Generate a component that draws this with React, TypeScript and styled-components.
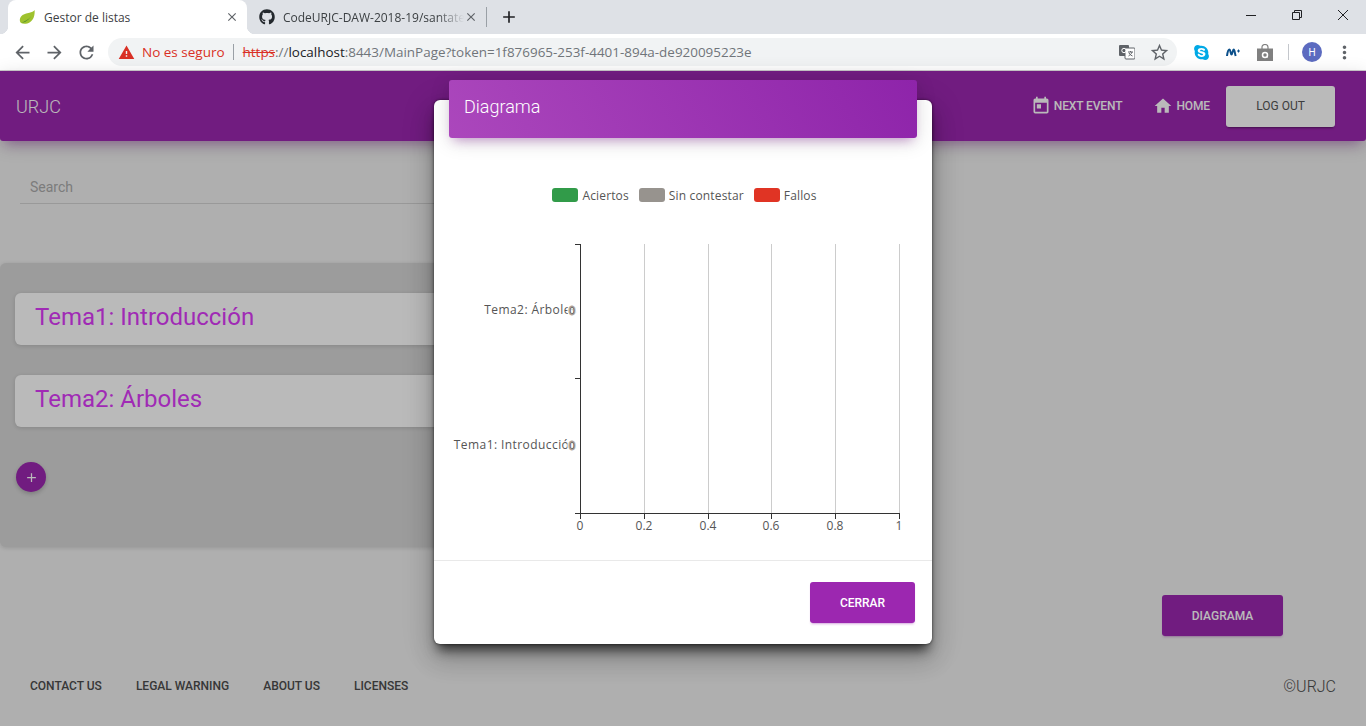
import React from 'react';
import styled, { createGlobalStyle } from 'styled-components';
import { MdArrowBack, MdArrowForward, MdRefresh, MdToday, MdHome, MdAdd, MdStarBorder, MdWarning, MdMoreVert, MdClose } from 'react-icons/md';
import { FaGithub, FaSkype } from 'react-icons/fa';

const Global = createGlobalStyle`
  html, body { margin: 0; padding: 0; height: 726px; overflow: hidden; background: #f0f0f0; }
  body { font-family: Roboto, "Liberation Sans", sans-serif; }
  * { box-sizing: border-box; }
`;

const Root = styled.div`position: relative; width: 1366px; height: 726px; overflow: hidden; display: flex; flex-direction: column;`;

const TabStrip = styled.div`height: 34px; background: #dee1e6; display: flex; align-items: stretch; padding-left: 8px; flex: none;`;
const Tab = styled.div<{ $active?: boolean; $w: number }>`
  position: relative; width: ${p => p.$w}px; display: flex; align-items: center; padding-left: 12px;
  background: ${p => (p.$active ? '#fff' : 'transparent')}; border-radius: 8px 8px 0 0;
  font: 12px "Open Sans", "Noto Sans", sans-serif; color: #3c4043; white-space: nowrap;
  ${p => p.$active && `
    &::before, &::after { content: ''; position: absolute; bottom: 0; width: 8px; height: 8px; }
    &::before { left: -8px; background: radial-gradient(circle at 0 0, transparent 8px, #fff 8.5px); }
    &::after { right: -8px; background: radial-gradient(circle at 100% 0, transparent 8px, #fff 8.5px); }
  `}
`;
const TabIcon = styled.span`width: 16px; height: 16px; margin-right: 8px; display: flex; flex: none;`;
const TabTitle = styled.span<{ $w: number; $fade?: boolean }>`
  width: ${p => p.$w}px; overflow: hidden; flex: none;
  ${p => p.$fade && `-webkit-mask-image: linear-gradient(90deg, #000 85%, transparent);`}
`;
const TabClose = styled.span`display: flex; color: #5f6368; font-size: 14px; flex: none;`;
const TabSep = styled.span`width: 1px; height: 20px; background: #9aa0a6; align-self: center; flex: none;`;
const NewTab = styled.span`width: 44px; display: flex; align-items: center; justify-content: center; font-size: 20px; color: #202124;`;
const WinControls = styled.div`margin-left: auto; display: flex; height: 29px; align-items: center;`;
const WinBtn = styled.span`width: 46px; display: flex; justify-content: center; color: #202124;`;

const Toolbar = styled.div`height: 37px; background: #fff; display: flex; align-items: center; padding-left: 6px; flex: none; border-bottom: 1px solid #ccc;`;
const ToolBtn = styled.span`width: 32px; height: 32px; display: flex; align-items: center; justify-content: center; color: #5f6368; font-size: 21px; flex: none;`;
const Omnibox = styled.div`
  width: 1069px; height: 28px; margin-left: 6px; margin-right: 8px; border-radius: 14px; background: #f1f3f4;
  display: flex; align-items: center; padding-left: 10px; font: 13.45px "Open Sans", "Noto Sans", sans-serif; color: #70757a; white-space: nowrap; flex: none;
`;
const Warn = styled.span`display: flex; color: #d93025; font-size: 17px; margin-right: 7px;`;
const Insecure = styled.span`color: #d93025; font-size: 13.5px;`;
const OmniSep = styled.span`width: 1px; height: 16px; background: #9aa0a6; margin: 0 9px 0 8px;`;
const Strike = styled.span`color: #d93025; text-decoration: line-through;`;
const Host = styled.span`color: #202124;`;
const OmniRight = styled.span`margin-left: auto; display: flex; align-items: center; padding-right: 2px;`;
const ToolSep = styled.span`width: 1px; height: 16px; background: #c4c7cc; margin: 0 7px 0 7px; flex: none;`;
const Avatar = styled.span`width: 20px; height: 20px; border-radius: 50%; background: #5c6bc0; color: #fff; font: 10px Roboto, sans-serif; display: flex; align-items: center; justify-content: center; margin: 0 6px 0 6px; flex: none;`;

const Navbar = styled.header`
  height: 70px; background: #9c27b0; border-radius: 0 0 3px 3px; flex: none; display: flex; align-items: center; padding: 0 31px 0 16px;
  box-shadow: 0 4px 20px rgba(0,0,0,.14), 0 7px 12px -5px rgba(156,39,176,.46); position: relative;
`;
const Brand = styled.span`font-size: 18px; font-weight: 300; color: #fff; margin-right: auto;`;
const NavLink = styled.span<{ $gap: number }>`
  display: flex; align-items: center; gap: 3px; font-size: 12px; font-weight: 500; letter-spacing: -.12px; color: #fff; margin-right: ${p => p.$gap}px; text-transform: uppercase;
  svg { font-size: 20px; }
`;
const Logout = styled.span`width: 109px; height: 41px; border-radius: 3px; background: #fff; color: #555; font-size: 12px; display: flex; align-items: center; justify-content: center; box-shadow: 0 2px 2px rgba(0,0,0,.14), 0 3px 1px -2px rgba(0,0,0,.2);`;

const Search = styled.div`width: 663px; height: 33px; margin: 30px 0 0 20px; border-bottom: 1px solid #d2d2d2; padding-left: 10px; font-size: 14px; line-height: 32px; color: #aaa; flex: none;`;
const Panel = styled.section`width: 683px; height: 284px; margin-top: 59px; padding: 30px 23px 0 15px; background: #d6d6d6; border-radius: 6px; flex: none; box-shadow: 0 1px 4px rgba(0,0,0,.14);`;
const TopicCard = styled.div`height: 52px; background: #fff; border-radius: 6px; margin-bottom: 30px; padding-left: 20px; box-shadow: 0 1px 4px rgba(0,0,0,.14);`;
const TopicTitle = styled.h3`position: relative; z-index: 1; margin: 0; font-size: 24px; font-weight: 400; line-height: 48px; color: #a02ab5;`;
const Fab = styled.span`margin: 35px 0 0 1px; width: 30px; height: 30px; border-radius: 50%; background: #9c27b0; color: #fff; display: flex; align-items: center; justify-content: center; font-size: 15px; box-shadow: 0 2px 4px rgba(0,0,0,.2);`;
const ActionRow = styled.div`display: flex; justify-content: flex-end; padding-right: 83px; margin-top: 48px; flex: none;`;
const DiagramBtn = styled.span`width: 121px; height: 41px; border-radius: 3px; background: #9c27b0; color: #fff; font-size: 12px; font-weight: 500; display: flex; align-items: center; justify-content: center; box-shadow: 0 2px 2px rgba(156,39,176,.14), 0 3px 1px -2px rgba(156,39,176,.2);`;
const Footer = styled.footer`margin-top: 41px; padding: 0 30px; display: flex; align-items: center; height: 18px; flex: none;`;
const FootLink = styled.span`font-size: 12px; font-weight: 500; color: #4c4c4c; margin-right: 34px; text-transform: uppercase;`;
const Copy = styled.span`margin-left: auto; font-size: 16px; font-weight: 300; color: #4c4c4c;`;

const Overlay = styled.div`position: absolute; left: 0; right: 0; top: 71px; bottom: 0; background: rgba(0,0,0,.27); display: flex; justify-content: center; align-items: flex-start;`;
const Modal = styled.div`
  position: relative; width: 498px; height: 544px; margin-top: 29px; background: #fff; border-radius: 6px; display: flex; flex-direction: column;
  box-shadow: 0 16px 24px 2px rgba(0,0,0,.14), 0 6px 30px 5px rgba(0,0,0,.12), 0 10px 12px -4px rgba(0,0,0,.65), 0 0 3px rgba(0,0,0,.6);
`;
const ModalHead = styled.div`
  height: 58px; margin: -20px 15px 0; padding: 0 0 5px 15px; border-radius: 3px; display: flex; align-items: center; flex: none;
  background: linear-gradient(60deg, #ab47bc, #8e24aa); color: #fff; font-size: 18px; font-weight: 300;
  box-shadow: 0 4px 20px rgba(0,0,0,.14), 0 7px 10px -5px rgba(156,39,176,.4);
`;
const Legend = styled.div`display: flex; align-items: center; justify-content: center; margin-top: 48px; height: 18px; font: 12px "Open Sans", "Noto Sans", sans-serif; letter-spacing: .15px; color: #555; flex: none; padding-left: 3px;`;
const Swatch = styled.span<{ $c: string }>`width: 26px; height: 14px; border-radius: 3px; background: ${p => p.$c}; margin-right: 4px;`;
const LegendLabel = styled.span`margin-right: 10px;`;
const ChartSvg = styled.svg`display: block; margin-top: 32px; flex: none;`;
const ModalFoot = styled.div`margin-top: auto; height: 84px; border-top: 1px solid #e9e9e9; display: flex; justify-content: flex-end; align-items: flex-start; padding: 21px 17px 0 0; flex: none;`;
const CloseBtn = styled.span`width: 105px; height: 41px; border-radius: 3px; background: #9c27b0; color: #fff; font-size: 12px; font-weight: 500; display: flex; align-items: center; justify-content: center; box-shadow: 0 2px 2px rgba(156,39,176,.14), 0 3px 1px -2px rgba(156,39,176,.2);`;

const X0 = 146, Y0 = 8;
const ticks = [0, 64, 128, 191, 255, 319];
const labels = ['0', '0.2', '0.4', '0.6', '0.8', '1'];
const txt = { fontFamily: '"Open Sans","Noto Sans",sans-serif', fontSize: 12, fill: '#555' };

function Chart() {
  return (
    <ChartSvg width={498} height={300}>
      {ticks.slice(1).map(t => <line key={t} x1={X0 + t + .5} x2={X0 + t + .5} y1={Y0} y2={Y0 + 270} stroke="#ccc" />)}
      <line x1={X0 + .5} x2={X0 + .5} y1={Y0} y2={Y0 + 270} stroke="#333" />
      <line x1={X0 - 5} x2={X0 + 320} y1={Y0 + 269.5} y2={Y0 + 269.5} stroke="#333" />
      {[0, 134].map(t => <line key={t} x1={X0 - 5} x2={X0} y1={Y0 + t + .5} y2={Y0 + t + .5} stroke="#333" />)}
      {ticks.map((t, i) => (
        <g key={t}>
          <line x1={X0 + t + .5} x2={X0 + t + .5} y1={Y0 + 270} y2={Y0 + 275} stroke="#333" />
          <text x={X0 + t} y={Y0 + 286} textAnchor="middle" {...txt}>{labels[i]}</text>
        </g>
      ))}
      <text x={X0 - 3} y={Y0 + 70} textAnchor="end" letterSpacing={.42} {...txt}>Tema2: Árboles</text>
      <text x={X0 - 3} y={Y0 + 205} textAnchor="end" letterSpacing={.42} {...txt}>Tema1: Introducción</text>
      {[70, 205].map(y => (
        <g key={y}>
          <text x={X0 - 8} y={Y0 + y + .5} textAnchor="middle" fontFamily='"Open Sans",sans-serif' fontSize={13} fill="#fff" stroke="#fff" strokeWidth={3}>0</text>
          <text x={X0 - 8} y={Y0 + y + .5} textAnchor="middle" fontFamily='"Open Sans",sans-serif' fontSize={13} fill="#fff" stroke="#a89a8f" strokeWidth={.8}>0</text>
          <text x={X0 - 8} y={Y0 + y - .5} textAnchor="middle" fontFamily='"Open Sans",sans-serif' fontSize={9} fill="#555">0</text>
        </g>
      ))}
    </ChartSvg>
  );
}

const Leaf = () => (
  <svg width="18" height="16" viewBox="0 0 18 16" style={{ marginLeft: -1 }}><path d="M16.500 .5C17 6 15.500 11 11.500 13.500 8.500 15.500 4 15.500 1.800 14.200.6 12.500.5 10 1.800 8 4 4.500 8.500 4.200 11 3.500c2.500-.6 4.500-1.500 5.500-3z" fill="#9fc22e" /><path d="M2.500 14.500C6 14 11 11.500 13 6.500c-1 3-5 5-10.500 8z" fill="#4f8f2f" /></svg>
);
const Translate = () => (
  <svg width="16" height="16" viewBox="0 0 16 16"><rect x="0" y="1" width="10" height="11" rx="1" fill="#5f6368" /><rect x="6" y="4" width="10" height="11" rx="1" fill="#fff" stroke="#5f6368" /><circle cx="5" cy="6.500" r="2.200" fill="none" stroke="#fff" /><path d="M9 8h5M11.500 7v1M13 8c-.5 2-2 3-3.500 4M10 9c.7 1.500 2 2.500 3.500 3" stroke="#5f6368" fill="none" /></svg>
);
const MPlus = () => (
  <svg width="14" height="9" viewBox="0 0 14 9"><path d="M1 8C1.500 4 2.500 1.500 3.500 1.500c1 0 1 5 2 5s1.200-5 2.200-5c1 0 1 4 2 6.500" stroke="#0b4f8a" strokeWidth="2" fill="none" /><path d="M11 3h3M12.500 1.500v3" stroke="#0b4f8a" /></svg>
);
const Bag = () => (
  <svg width="16" height="17" viewBox="0 0 16 17"><path d="M0 4.500h16V17H0z" fill="#808080" /><path d="M5 5V3a3 2.500 0 0 1 6 0v2" stroke="#808080" strokeWidth="1.200" fill="none" /><circle cx="8" cy="11" r="2.500" fill="none" stroke="#fff" strokeWidth="1.500" /><path d="M10.500 9v4.500" stroke="#fff" /></svg>
);
const WinMin = () => <svg width="10" height="10"><path d="M0 5.500h10" stroke="#202124" /></svg>;
const WinRestore = () => <svg width="10" height="10"><path d="M.5 2.500h7v7h-7zM2.500 2.500v-2h7v7h-2" stroke="#202124" fill="none" /></svg>;
const WinX = () => <svg width="10" height="10"><path d="M0 0l10 10M10 0L0 10" stroke="#202124" /></svg>;

export default function App() {
  return (
    <Root>
      <Global />
      <TabStrip>
        <Tab $active $w={239}>
          <TabIcon><Leaf /></TabIcon>
          <TabTitle $w={181}>Gestor de listas</TabTitle>
          <TabClose><MdClose /></TabClose>
        </Tab>
        <Tab $w={239}>
          <TabIcon><FaGithub size={16} color="#24292e" /></TabIcon>
          <TabTitle $w={181} $fade>CodeURJC-DAW-2018-19/santate</TabTitle>
          <TabClose><MdClose /></TabClose>
        </Tab>
        <TabSep />
        <NewTab><MdAdd /></NewTab>
        <WinControls>
          <WinBtn><WinMin /></WinBtn>
          <WinBtn><WinRestore /></WinBtn>
          <WinBtn><WinX /></WinBtn>
        </WinControls>
      </TabStrip>
      <Toolbar>
        <ToolBtn><MdArrowBack /></ToolBtn>
        <ToolBtn><MdArrowForward /></ToolBtn>
        <ToolBtn><MdRefresh /></ToolBtn>
        <Omnibox>
          <Warn><MdWarning /></Warn>
          <Insecure>No es seguro</Insecure>
          <OmniSep />
          <span><Strike>https</Strike>://<Host>localhost</Host>:8443/MainPage?token=1f876965-253f-4401-894a-de920095223e</span>
          <OmniRight>
            <ToolBtn><Translate /></ToolBtn>
            <ToolBtn><MdStarBorder /></ToolBtn>
          </OmniRight>
        </Omnibox>
        <ToolBtn><FaSkype color="#00a9e6" size={17} /></ToolBtn>
        <ToolBtn><MPlus /></ToolBtn>
        <ToolBtn><Bag /></ToolBtn>
        <ToolSep />
        <Avatar>H</Avatar>
        <ToolBtn><MdMoreVert /></ToolBtn>
      </Toolbar>
      <Navbar>
        <Brand>URJC</Brand>
        <NavLink $gap={31}><MdToday />Next event</NavLink>
        <NavLink $gap={16}><MdHome />Home</NavLink>
        <Logout>LOG OUT</Logout>
      </Navbar>
      <Search>Search</Search>
      <Panel>
        <TopicCard><TopicTitle>Tema1: Introducción</TopicTitle></TopicCard>
        <TopicCard><TopicTitle>Tema2: Árboles</TopicTitle></TopicCard>
        <Fab><MdAdd /></Fab>
      </Panel>
      <ActionRow><DiagramBtn>DIAGRAMA</DiagramBtn></ActionRow>
      <Footer>
        <FootLink>Contact us</FootLink>
        <FootLink>Legal warning</FootLink>
        <FootLink>About us</FootLink>
        <FootLink>Licenses</FootLink>
        <Copy>©URJC</Copy>
      </Footer>
      <Overlay>
        <Modal>
          <ModalHead>Diagrama</ModalHead>
          <Legend>
            <Swatch $c="#319b49" /><LegendLabel>Aciertos</LegendLabel>
            <Swatch $c="#97938e" /><LegendLabel>Sin contestar</LegendLabel>
            <Swatch $c="#e03424" /><span>Fallos</span>
          </Legend>
          <Chart />
          <ModalFoot><CloseBtn>CERRAR</CloseBtn></ModalFoot>
        </Modal>
      </Overlay>
    </Root>
  );
}
